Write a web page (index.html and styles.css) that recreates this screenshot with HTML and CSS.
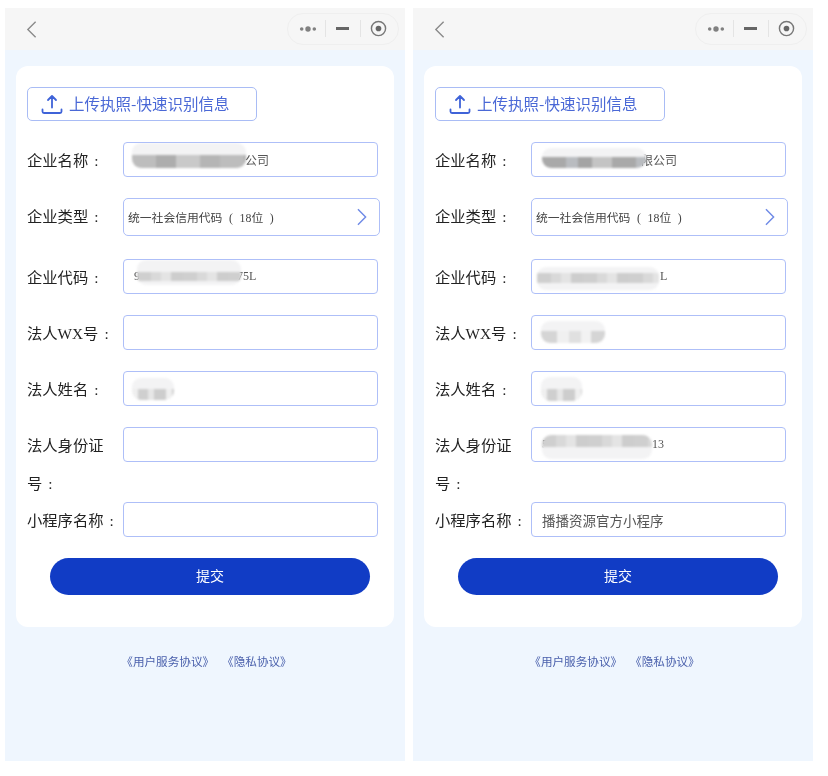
FILE: index.html
```html
<!DOCTYPE html>
<html lang="zh-CN">
<head>
<meta charset="utf-8">
<title>企业信息</title>
<link rel="stylesheet" href="styles.css">
</head>
<body>
<main class="screens">
  <section class="phone">
    <header class="nav">
      <svg class="back" viewBox="0 0 12 20"><path d="M10.5 1.5 2 10l8.500 8.500"/></svg>
      <div class="capsule">
        <svg class="more" viewBox="0 0 20 6"><circle cx="3" cy="3" r="2"/><circle cx="10" cy="3" r="3"/><circle cx="17" cy="3" r="2"/></svg>
        <i class="sep"></i>
        <i class="minus"></i>
        <i class="sep"></i>
        <svg class="target" viewBox="0 0 18 18"><circle class="ring" cx="9" cy="9" r="7.500"/><circle cx="9" cy="9" r="3"/></svg>
      </div>
    </header>
    <div class="card">
      <button class="upload">
        <svg viewBox="0 0 22 22"><path d="M11 4v11.500M7 8l4-4 4 4M1.500 17.500v2a1.500 1.500 0 0 0 1.500 1.500h16a1.500 1.500 0 0 0 1.500-1.500v-2"/></svg>
        <span>上传执照-快速识别信息</span>
      </button>
      <div class="row">
        <div class="label">企业名称<span class="colon">:</span></div>
        <div class="field"><span class="gap g-name-l"></span>公司<i class="mask m-name-l"></i></div>
      </div>
      <div class="row row-select">
        <div class="label">企业类型<span class="colon">:</span></div>
        <div class="select">
          <span>统一社会信用代码 ( 18位 )</span>
          <svg viewBox="0 0 12 20"><path d="M1.500 1.500 10 10l-8.500 8.500"/></svg>
        </div>
      </div>
      <div class="row">
        <div class="label">企业代码<span class="colon">:</span></div>
        <div class="field field-code">9<span class="gap g-code-l"></span>75L<i class="mask m-code-l"></i></div>
      </div>
      <div class="row">
        <div class="label">法人WX号<span class="colon">:</span></div>
        <div class="field"></div>
      </div>
      <div class="row">
        <div class="label">法人姓名<span class="colon">:</span></div>
        <div class="field"><i class="mask m-person-l"></i></div>
      </div>
      <div class="row row-tall">
        <div class="label">法人身份证<br>号<span class="colon">:</span></div>
        <div class="field"></div>
      </div>
      <div class="row">
        <div class="label">小程序名称<span class="colon">:</span></div>
        <div class="field"></div>
      </div>
      <button class="submit">提交</button>
    </div>
    <footer class="links"><span>《用户服务协议》</span><span>《隐私协议》</span></footer>
  </section>

  <section class="phone">
    <header class="nav">
      <svg class="back" viewBox="0 0 12 20"><path d="M10.5 1.5 2 10l8.500 8.500"/></svg>
      <div class="capsule">
        <svg class="more" viewBox="0 0 20 6"><circle cx="3" cy="3" r="2"/><circle cx="10" cy="3" r="3"/><circle cx="17" cy="3" r="2"/></svg>
        <i class="sep"></i>
        <i class="minus"></i>
        <i class="sep"></i>
        <svg class="target" viewBox="0 0 18 18"><circle class="ring" cx="9" cy="9" r="7.500"/><circle cx="9" cy="9" r="3"/></svg>
      </div>
    </header>
    <div class="card">
      <button class="upload">
        <svg viewBox="0 0 22 22"><path d="M11 4v11.500M7 8l4-4 4 4M1.500 17.500v2a1.500 1.500 0 0 0 1.500 1.500h16a1.500 1.500 0 0 0 1.500-1.500v-2"/></svg>
        <span>上传执照-快速识别信息</span>
      </button>
      <div class="row">
        <div class="label">企业名称<span class="colon">:</span></div>
        <div class="field"><span class="gap g-name-r"></span>限公司<i class="mask m-name-r"></i></div>
      </div>
      <div class="row row-select">
        <div class="label">企业类型<span class="colon">:</span></div>
        <div class="select">
          <span>统一社会信用代码 ( 18位 )</span>
          <svg viewBox="0 0 12 20"><path d="M1.500 1.500 10 10l-8.500 8.500"/></svg>
        </div>
      </div>
      <div class="row">
        <div class="label">企业代码<span class="colon">:</span></div>
        <div class="field field-code"><span class="gap g-code-r"></span>L<i class="mask m-code-r"></i></div>
      </div>
      <div class="row">
        <div class="label">法人WX号<span class="colon">:</span></div>
        <div class="field"><i class="mask m-wx-r"></i></div>
      </div>
      <div class="row">
        <div class="label">法人姓名<span class="colon">:</span></div>
        <div class="field"><i class="mask m-person-r"></i></div>
      </div>
      <div class="row row-tall">
        <div class="label">法人身份证<br>号<span class="colon">:</span></div>
        <div class="field field-code">5<span class="gap g-id-r"></span>13<i class="mask m-id-r"></i></div>
      </div>
      <div class="row">
        <div class="label">小程序名称<span class="colon">:</span></div>
        <div class="field field-app">播播资源官方小程序</div>
      </div>
      <button class="submit">提交</button>
    </div>
    <footer class="links"><span>《用户服务协议》</span><span>《隐私协议》</span></footer>
  </section>
</main>
</body>
</html>
```
FILE: styles.css
```css
* { box-sizing: border-box; }
html, body { margin: 0; height: 776px; background: #fff; overflow: hidden; }
body { font-family: "Liberation Serif", "Noto Sans CJK SC", serif; }

.screens { display: flex; gap: 8px; padding: 8px 5px 0; }
.phone {
  width: 400px;
  height: 753px;
  background: #eff6fe;
  filter: blur(0.35px);
}

.nav {
  height: 42px;
  background: #f6f6f6;
  display: flex;
  align-items: center;
  justify-content: space-between;
  padding: 0 6px 0 21px;
}
.back { width: 11px; height: 19px; }
.back path { fill: none; stroke: #8a8a8a; stroke-width: 1.500; }

.capsule {
  width: 112px;
  height: 32px;
  margin-top: -1px;
  border: 1px solid #efefef;
  border-radius: 16px;
  display: flex;
  align-items: center;
  padding-left: 11px;
}
.more { width: 18px; height: 6px; fill: #808080; }
.sep { width: 1px; height: 17px; background: #e4e4e4; }
.capsule .sep:nth-of-type(1) { margin-left: 8px; }
.minus { width: 13px; height: 2.500px; background: #666; margin: 0 11px 0 10px; }
.target { width: 17px; height: 17px; margin-left: 9px; fill: #666; }
.target .ring { fill: none; stroke: #777; stroke-width: 1.500; }

.card {
  width: 378px;
  height: 561px;
  margin: 16px 0 0 11px;
  padding: 21px 0 0 11px;
  background: #fff;
  border-radius: 12px;
}

.upload {
  width: 230px;
  height: 34px;
  margin: 0 0 21px;
  padding: 0 0 2px 13px;
  display: flex;
  align-items: center;
  gap: 6px;
  background: #fff;
  border: 1px solid #a9bcf5;
  border-radius: 5px;
  color: #4a68d6;
  font: 15.500px "Noto Sans CJK SC", sans-serif;
}
.upload svg { width: 22px; height: 22px; flex: none; }
.upload path { fill: none; stroke: #3f63d8; stroke-width: 1.800; stroke-linecap: round; stroke-linejoin: round; }

.row { display: flex; align-items: flex-start; margin-bottom: 18px; }
.row-select { margin-bottom: 23px; }
.row-tall { margin-bottom: -1px; }

.label {
  width: 96px;
  flex: none;
  font-size: 15.300px;
  line-height: 38px;
  color: #222;
  white-space: nowrap;
}
.colon { margin-left: 6px; }

.field {
  position: relative;
  width: 255px;
  height: 35px;
  padding: 0 10px;
  background: #fff;
  border: 1px solid #aebff8;
  border-radius: 4px;
  display: flex;
  align-items: center;
  font-size: 12px;
  color: #555;
  overflow: hidden;
}
.field-code { align-items: flex-start; padding-top: 7px; line-height: 18px; }
.field-app { font-size: 13.500px; color: #555; }
.gap { display: inline-block; flex: none; }
.g-name-l { width: 111px; }
.g-name-r { width: 99px; }
.g-code-l { width: 97px; }
.g-code-r { width: 118px; }
.g-id-r { width: 104px; }

.select {
  width: 257px;
  height: 38px;
  padding: 0 11px 0 4px;
  display: flex;
  align-items: center;
  justify-content: space-between;
  background: #fff;
  border: 1px solid #aebff8;
  border-radius: 5px;
  font-size: 11.800px;
  word-spacing: 3.700px;
  color: #444;
}
.select svg { width: 12px; height: 18px; }
.select path { fill: none; stroke: #6f8ae6; stroke-width: 1.600; }

/* Redaction smudges lying over the values */
.mask {
  position: absolute;
  border-radius: 9px;
  filter: blur(0.8px);
  background-color: #f3f3f4;
  background-repeat: no-repeat;
  background-position: left bottom;
  background-size: 100% 52%;
  background-image: repeating-linear-gradient(90deg, #cfcfcf 0 14px, #d9d9d9 14px 24px, #e4e4e4 24px 34px, #cdcdcd 34px 46px);
}
.m-name-l { left: 8px; top: 0; width: 114px; height: 25px; background-image: repeating-linear-gradient(90deg, #bdbdbd 0 24px, #adadad 24px 44px, #c9c9c9 44px 68px, #b5b5b5 68px 88px); }
.m-code-l { left: 13px; top: 0; width: 104px; height: 25px; background-size: 100% 9px; background-position: left 12px; }
.m-person-l { left: 8px; top: 6px; width: 42px; height: 22px; background-image: repeating-linear-gradient(90deg, #efefef 0 6px, #cfcfcf 6px 16px, #e6e6e6 16px 22px, #cdcdcd 22px 34px); }
.m-name-r { left: 10px; top: 5px; width: 104px; height: 20px; background-size: 100% 55%; background-image: repeating-linear-gradient(90deg, #a9a9a9 0 24px, #b9bcc0 24px 36px, #a4a4a4 36px 50px, #c4c4c4 50px 70px); }
.m-code-r { left: 5px; top: 7px; width: 122px; height: 23px; background-size: 100% 10px; background-position: left 6px; }
.m-wx-r { left: 9px; top: 5px; width: 64px; height: 22px; background-size: 100% 55%; background-image: repeating-linear-gradient(90deg, #d5d5d5 0 16px, #f0f0f0 16px 28px, #e0e0e0 28px 40px, #f2f2f2 40px 50px, #d5d5d5 50px 64px); }
.m-person-r { left: 9px; top: 5px; width: 41px; height: 24px; background-size: 100% 50%; background-image: repeating-linear-gradient(90deg, #efefef 0 6px, #cfcfcf 6px 16px, #e6e6e6 16px 22px, #cdcdcd 22px 34px); }
.m-id-r { left: 10px; top: 7px; width: 110px; height: 24px; background-size: 100% 50%; background-position: left top; }

.submit {
  display: block;
  width: 320px;
  height: 37px;
  margin-left: 23px;
  padding: 0 0 3px;
  border: 0;
  border-radius: 19px;
  background: #113cc5;
  color: #fff;
  font: 14px "Noto Sans CJK SC", sans-serif;
}

.links {
  margin-top: 24px;
  padding-left: 3px;
  display: flex;
  justify-content: center;
  gap: 8px;
  font: 11.600px/20px "Noto Sans CJK SC", sans-serif;
  color: #4a60ac;
}
```
